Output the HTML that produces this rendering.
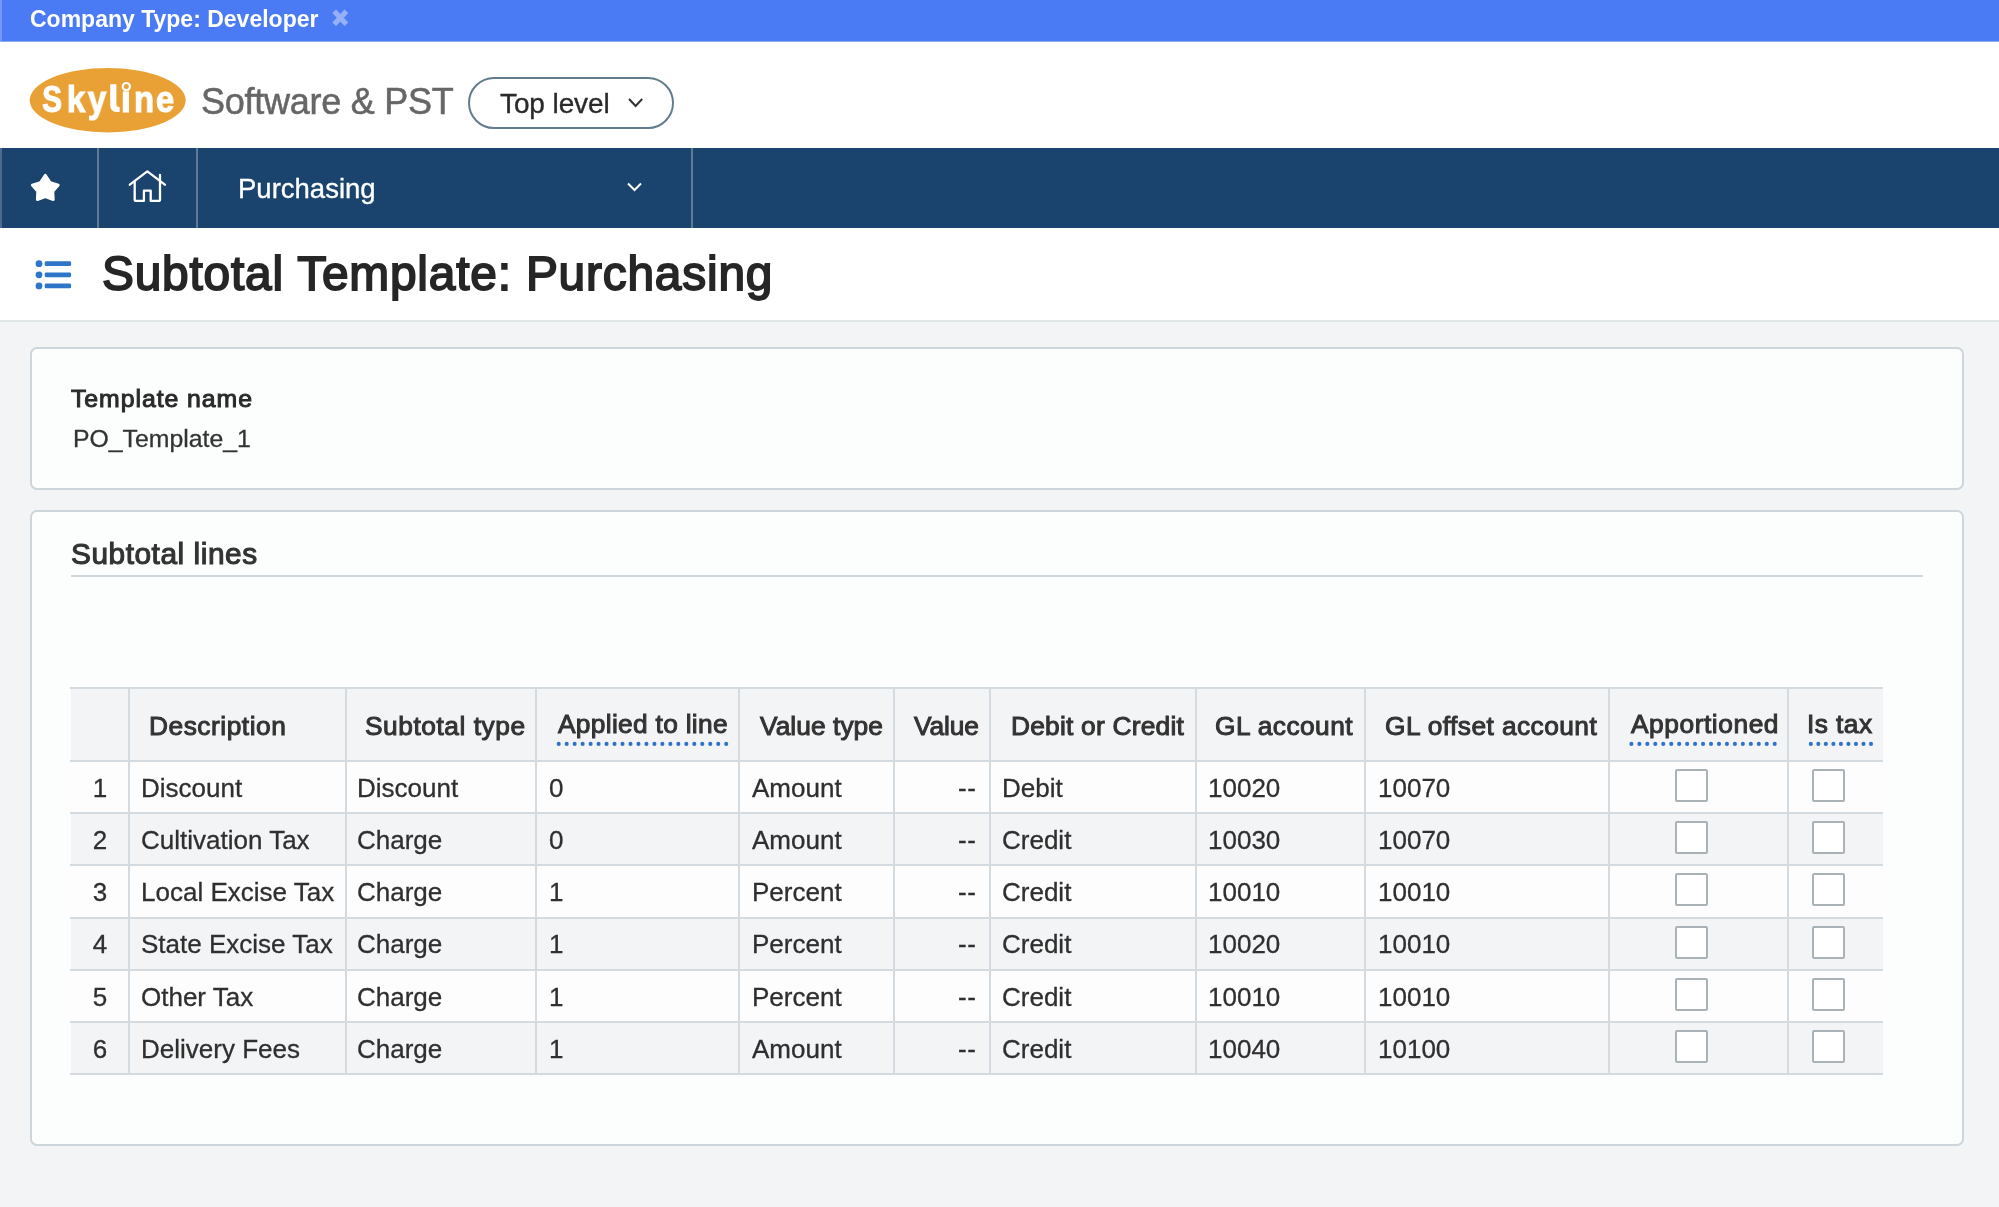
<!DOCTYPE html>
<html><head><meta charset="utf-8"><title>Subtotal Template: Purchasing</title>
<style>
html,body{margin:0;padding:0;}
body{width:1999px;height:1207px;position:relative;overflow:hidden;background:#f3f4f6;font-family:"Liberation Sans", sans-serif;}
.t{position:absolute;white-space:nowrap;will-change:transform;}
.b{position:absolute;}
svg{position:absolute;overflow:visible;}
</style></head><body>
<div class="b" style="left:0px;top:0px;width:1999px;height:42px;background:#4a7bf5;"></div>
<div class="b" style="left:0px;top:0px;width:2px;height:42px;background:#7598f3;"></div>
<div class="b" style="left:0px;top:41px;width:1999px;height:1px;background:#8fabf6;"></div>
<div class="t" style="left:29.50px;top:8.33px;font-size:23px;line-height:23px;color:#ffffff;font-weight:bold;">Company Type: Developer</div>
<svg style="left:0;top:0" width="400" height="42"><path d="M334.2 11.2 L346.4 24.2 M346.4 11.2 L334.2 24.2" stroke="#96b0f7" stroke-width="5.2" stroke-linecap="butt"/></svg>
<div class="b" style="left:0px;top:42px;width:1999px;height:106px;background:#ffffff;"></div>
<svg style="left:0;top:0" width="200" height="150"><ellipse cx="107.7" cy="100.2" rx="78" ry="32.2" fill="#e9a136"/></svg>
<div class="t" style="left:11.80px;width:80px;text-align:center;top:80.58px;font-size:37px;line-height:37px;color:#ffffff;font-weight:bold;-webkit-text-stroke:1.1px #fff;transform:scaleX(0.8);">S</div>
<div class="t" style="left:35.60px;width:80px;text-align:center;top:80.58px;font-size:37px;line-height:37px;color:#ffffff;font-weight:bold;-webkit-text-stroke:1.1px #fff;transform:scaleX(0.9);">k</div>
<div class="t" style="left:57.30px;width:80px;text-align:center;top:80.58px;font-size:37px;line-height:37px;color:#ffffff;font-weight:bold;-webkit-text-stroke:1.1px #fff;transform:scaleX(0.9);">y</div>
<div class="t" style="left:86.20px;width:80px;text-align:center;top:80.58px;font-size:37px;line-height:37px;color:#ffffff;font-weight:bold;-webkit-text-stroke:1.1px #fff;transform:scaleX(1.0);">&#305;</div>
<div class="t" style="left:104.00px;width:80px;text-align:center;top:80.58px;font-size:37px;line-height:37px;color:#ffffff;font-weight:bold;-webkit-text-stroke:1.1px #fff;transform:scaleX(0.88);">n</div>
<div class="t" style="left:124.50px;width:80px;text-align:center;top:80.58px;font-size:37px;line-height:37px;color:#ffffff;font-weight:bold;-webkit-text-stroke:1.1px #fff;transform:scaleX(0.88);">e</div>
<svg style="left:0;top:0" width="200" height="150"><path d="M110.2 84.3 H116.4 V104.6 Q116.4 106.9 118.6 106.9 H119.6 V112 H117.2 Q110.2 112 110.2 105.2 Z" fill="#fff"/></svg>
<svg style="left:0;top:0" width="200" height="150"><circle cx="126.3" cy="86.6" r="3.6" fill="none" stroke="#ffffff" stroke-width="2.2"/></svg>
<div class="t" style="left:201.00px;top:83.83px;font-size:36px;line-height:36px;color:#666666;font-weight:normal;letter-spacing:-0.25px;-webkit-text-stroke:0.55px #666;">Software &amp; PST</div>
<div class="b" style="left:468.4px;top:77px;width:201.8px;height:48px;border:2px solid #627c8c;border-radius:26px;box-sizing:content-box;"></div>
<div class="t" style="left:499.50px;top:89.90px;font-size:28px;line-height:28px;color:#2a2a2a;font-weight:normal;letter-spacing:-0.1px;-webkit-text-stroke:0.35px #2a2a2a;">Top level</div>
<svg style="left:626px;top:96px" width="20" height="14"><path d="M3 3 L9.6 10 L16.2 3" fill="none" stroke="#333" stroke-width="2"/></svg>
<div class="b" style="left:0px;top:148px;width:1999px;height:80px;background:#1a446e;"></div>
<div class="b" style="left:0px;top:148px;width:2px;height:80px;background:#4d6a8a;"></div>
<div class="b" style="left:97px;top:148px;width:2px;height:80px;background:#5f7a97;"></div>
<div class="b" style="left:196px;top:148px;width:2px;height:80px;background:#5f7a97;"></div>
<div class="b" style="left:691px;top:148px;width:2px;height:80px;background:#5f7a97;"></div>
<svg style="left:0;top:0" width="100" height="230"><path d="M45.3 175.2 L50.2 182.6 L58.3 185.1 L52.9 191.3 L53.3 199.6 L45.3 196.6 L37.3 199.6 L37.7 191.3 L32.3 185.1 L40.4 182.6 Z" fill="#fff" stroke="#fff" stroke-width="2.8" stroke-linejoin="round"/></svg>
<svg style="left:0;top:0" width="200" height="230"><path d="M129.8 184.7 L147.3 171.4 L164.9 184.7 M160 174.8 L160 180.5 M134.7 181.3 L134.7 199.4 Q134.7 200.9 136.2 200.9 L143.9 200.9 L143.9 190.6 L150.7 190.6 L150.7 200.9 L158.5 200.9 Q160 200.9 160 199.4 L160 181.3" fill="none" stroke="#fff" stroke-width="2.3" stroke-linecap="round" stroke-linejoin="round"/></svg>
<div class="t" style="left:237.50px;top:174.52px;font-size:27.5px;line-height:27.5px;color:#ffffff;font-weight:normal;-webkit-text-stroke:0.35px #fff;">Purchasing</div>
<svg style="left:625px;top:181px" width="20" height="14"><path d="M3 2.5 L9.5 9 L16 2.5" fill="none" stroke="#fff" stroke-width="2"/></svg>
<div class="b" style="left:0px;top:228px;width:1999px;height:92px;background:#ffffff;"></div>
<div class="b" style="left:0px;top:320px;width:1999px;height:2px;background:#e0e6e8;"></div>
<svg style="left:30px;top:255px" width="46" height="40"><circle cx="9" cy="8.7" r="3.4" fill="#2f76c8"/><circle cx="9" cy="19.8" r="3.4" fill="#2f76c8"/><circle cx="9" cy="30.9" r="3.4" fill="#2f76c8"/><rect x="14.7" y="6.3" width="26.4" height="4.8" rx="1.4" fill="#2f76c8"/><rect x="14.7" y="17.4" width="26.4" height="4.8" rx="1.4" fill="#2f76c8"/><rect x="14.7" y="28.5" width="26.4" height="4.8" rx="1.4" fill="#2f76c8"/></svg>
<div class="t" style="left:102.20px;top:249.74px;font-size:47.8px;line-height:47.8px;color:#262626;font-weight:normal;letter-spacing:0.82px;-webkit-text-stroke:1.8px #262626;">Subtotal Template: Purchasing</div>
<div class="b" style="left:30px;top:347px;width:1934px;height:143px;background:#fcfdfd;border:2px solid #cdd6db;border-radius:7px;background:#fcfdfd;box-sizing:border-box;"></div>
<div class="t" style="left:71.40px;top:387.11px;font-size:24.8px;line-height:24.8px;color:#2a2a2a;font-weight:normal;letter-spacing:0.95px;-webkit-text-stroke:1px #2a2a2a;">Template name</div>
<div class="t" style="left:73.20px;top:427.31px;font-size:24.8px;line-height:24.8px;color:#333333;font-weight:normal;-webkit-text-stroke:0.3px #333;">PO_Template_1</div>
<div class="b" style="left:30px;top:510px;width:1934px;height:636px;background:#fcfdfd;border:2px solid #cdd6db;border-radius:7px;background:#fcfdfd;box-sizing:border-box;"></div>
<div class="t" style="left:71.00px;top:539.27px;font-size:29.8px;line-height:29.8px;color:#333333;font-weight:normal;letter-spacing:0.55px;-webkit-text-stroke:1.1px #333;">Subtotal lines</div>
<div class="b" style="left:71px;top:574.5px;width:1852px;height:2px;background:#cfd8dc;"></div>
<div class="b" style="left:71px;top:688px;width:1812px;height:73px;background:#f3f4f6;"></div>
<div class="b" style="left:71px;top:761px;width:1812px;height:52px;background:#fdfdfd;"></div>
<div class="b" style="left:71px;top:813px;width:1812px;height:52px;background:#f3f4f6;"></div>
<div class="b" style="left:71px;top:865px;width:1812px;height:53px;background:#fdfdfd;"></div>
<div class="b" style="left:71px;top:918px;width:1812px;height:52px;background:#f3f4f6;"></div>
<div class="b" style="left:71px;top:970px;width:1812px;height:52px;background:#fdfdfd;"></div>
<div class="b" style="left:71px;top:1022px;width:1812px;height:52px;background:#f3f4f6;"></div>
<div class="b" style="left:70px;top:687px;width:1813px;height:2px;background:#d3dbe0;"></div>
<div class="b" style="left:70px;top:760px;width:1813px;height:2px;background:#d3dbe0;"></div>
<div class="b" style="left:70px;top:812px;width:1813px;height:2px;background:#d3dbe0;"></div>
<div class="b" style="left:70px;top:864px;width:1813px;height:2px;background:#d3dbe0;"></div>
<div class="b" style="left:70px;top:917px;width:1813px;height:2px;background:#d3dbe0;"></div>
<div class="b" style="left:70px;top:969px;width:1813px;height:2px;background:#d3dbe0;"></div>
<div class="b" style="left:70px;top:1021px;width:1813px;height:2px;background:#d3dbe0;"></div>
<div class="b" style="left:70px;top:1073px;width:1813px;height:2px;background:#d3dbe0;"></div>
<div class="b" style="left:128px;top:688px;width:2px;height:386px;background:#d3dbe0;"></div>
<div class="b" style="left:345px;top:688px;width:2px;height:386px;background:#d3dbe0;"></div>
<div class="b" style="left:535px;top:688px;width:2px;height:386px;background:#d3dbe0;"></div>
<div class="b" style="left:738px;top:688px;width:2px;height:386px;background:#d3dbe0;"></div>
<div class="b" style="left:893px;top:688px;width:2px;height:386px;background:#d3dbe0;"></div>
<div class="b" style="left:989px;top:688px;width:2px;height:386px;background:#d3dbe0;"></div>
<div class="b" style="left:1195px;top:688px;width:2px;height:386px;background:#d3dbe0;"></div>
<div class="b" style="left:1364px;top:688px;width:2px;height:386px;background:#d3dbe0;"></div>
<div class="b" style="left:1608px;top:688px;width:2px;height:386px;background:#d3dbe0;"></div>
<div class="b" style="left:1787px;top:688px;width:2px;height:386px;background:#d3dbe0;"></div>
<div class="t" style="left:148.90px;top:712.64px;font-size:26.3px;line-height:26.3px;color:#333333;font-weight:normal;letter-spacing:0.525px;-webkit-text-stroke:1.0px #333;">Description</div>
<div class="t" style="left:364.50px;top:712.64px;font-size:26.3px;line-height:26.3px;color:#333333;font-weight:normal;letter-spacing:0.546px;-webkit-text-stroke:1.0px #333;">Subtotal type</div>
<div class="t" style="left:558.20px;top:710.64px;font-size:26.3px;line-height:26.3px;color:#333333;font-weight:normal;letter-spacing:0.311px;-webkit-text-stroke:1.0px #333;">Applied to line</div>
<div class="t" style="left:760.20px;top:712.64px;font-size:26.3px;line-height:26.3px;color:#333333;font-weight:normal;letter-spacing:0.067px;-webkit-text-stroke:1.0px #333;">Value type</div>
<div class="t" style="left:913.95px;top:712.64px;font-size:26.3px;line-height:26.3px;color:#333333;font-weight:normal;letter-spacing:-0.1px;-webkit-text-stroke:1.0px #333;">Value</div>
<div class="t" style="left:1010.50px;top:712.64px;font-size:26.3px;line-height:26.3px;color:#333333;font-weight:normal;letter-spacing:0.232px;-webkit-text-stroke:1.0px #333;">Debit or Credit</div>
<div class="t" style="left:1214.50px;top:712.64px;font-size:26.3px;line-height:26.3px;color:#333333;font-weight:normal;letter-spacing:0.444px;-webkit-text-stroke:1.0px #333;">GL account</div>
<div class="t" style="left:1384.50px;top:712.64px;font-size:26.3px;line-height:26.3px;color:#333333;font-weight:normal;letter-spacing:0.441px;-webkit-text-stroke:1.0px #333;">GL offset account</div>
<div class="t" style="left:1630.60px;top:710.64px;font-size:26.3px;line-height:26.3px;color:#333333;font-weight:normal;letter-spacing:0.565px;-webkit-text-stroke:1.0px #333;">Apportioned</div>
<div class="t" style="left:1807.40px;top:710.64px;font-size:26.3px;line-height:26.3px;color:#333333;font-weight:normal;letter-spacing:0.44px;-webkit-text-stroke:1.0px #333;">Is tax</div>
<svg style="left:0;top:0" width="1999" height="800"><circle cx="558.70" cy="743.9" r="2.05" fill="#2f73c9"/><circle cx="566.68" cy="743.9" r="2.05" fill="#2f73c9"/><circle cx="574.65" cy="743.9" r="2.05" fill="#2f73c9"/><circle cx="582.63" cy="743.9" r="2.05" fill="#2f73c9"/><circle cx="590.60" cy="743.9" r="2.05" fill="#2f73c9"/><circle cx="598.58" cy="743.9" r="2.05" fill="#2f73c9"/><circle cx="606.56" cy="743.9" r="2.05" fill="#2f73c9"/><circle cx="614.53" cy="743.9" r="2.05" fill="#2f73c9"/><circle cx="622.51" cy="743.9" r="2.05" fill="#2f73c9"/><circle cx="630.49" cy="743.9" r="2.05" fill="#2f73c9"/><circle cx="638.46" cy="743.9" r="2.05" fill="#2f73c9"/><circle cx="646.44" cy="743.9" r="2.05" fill="#2f73c9"/><circle cx="654.41" cy="743.9" r="2.05" fill="#2f73c9"/><circle cx="662.39" cy="743.9" r="2.05" fill="#2f73c9"/><circle cx="670.37" cy="743.9" r="2.05" fill="#2f73c9"/><circle cx="678.34" cy="743.9" r="2.05" fill="#2f73c9"/><circle cx="686.32" cy="743.9" r="2.05" fill="#2f73c9"/><circle cx="694.30" cy="743.9" r="2.05" fill="#2f73c9"/><circle cx="702.27" cy="743.9" r="2.05" fill="#2f73c9"/><circle cx="710.25" cy="743.9" r="2.05" fill="#2f73c9"/><circle cx="718.22" cy="743.9" r="2.05" fill="#2f73c9"/><circle cx="726.20" cy="743.9" r="2.05" fill="#2f73c9"/></svg>
<svg style="left:0;top:0" width="1999" height="800"><circle cx="1631.40" cy="743.9" r="2.05" fill="#2f73c9"/><circle cx="1639.36" cy="743.9" r="2.05" fill="#2f73c9"/><circle cx="1647.32" cy="743.9" r="2.05" fill="#2f73c9"/><circle cx="1655.28" cy="743.9" r="2.05" fill="#2f73c9"/><circle cx="1663.24" cy="743.9" r="2.05" fill="#2f73c9"/><circle cx="1671.21" cy="743.9" r="2.05" fill="#2f73c9"/><circle cx="1679.17" cy="743.9" r="2.05" fill="#2f73c9"/><circle cx="1687.13" cy="743.9" r="2.05" fill="#2f73c9"/><circle cx="1695.09" cy="743.9" r="2.05" fill="#2f73c9"/><circle cx="1703.05" cy="743.9" r="2.05" fill="#2f73c9"/><circle cx="1711.01" cy="743.9" r="2.05" fill="#2f73c9"/><circle cx="1718.97" cy="743.9" r="2.05" fill="#2f73c9"/><circle cx="1726.93" cy="743.9" r="2.05" fill="#2f73c9"/><circle cx="1734.89" cy="743.9" r="2.05" fill="#2f73c9"/><circle cx="1742.86" cy="743.9" r="2.05" fill="#2f73c9"/><circle cx="1750.82" cy="743.9" r="2.05" fill="#2f73c9"/><circle cx="1758.78" cy="743.9" r="2.05" fill="#2f73c9"/><circle cx="1766.74" cy="743.9" r="2.05" fill="#2f73c9"/><circle cx="1774.70" cy="743.9" r="2.05" fill="#2f73c9"/></svg>
<svg style="left:0;top:0" width="1999" height="800"><circle cx="1810.80" cy="743.9" r="2.05" fill="#2f73c9"/><circle cx="1818.33" cy="743.9" r="2.05" fill="#2f73c9"/><circle cx="1825.85" cy="743.9" r="2.05" fill="#2f73c9"/><circle cx="1833.38" cy="743.9" r="2.05" fill="#2f73c9"/><circle cx="1840.90" cy="743.9" r="2.05" fill="#2f73c9"/><circle cx="1848.42" cy="743.9" r="2.05" fill="#2f73c9"/><circle cx="1855.95" cy="743.9" r="2.05" fill="#2f73c9"/><circle cx="1863.47" cy="743.9" r="2.05" fill="#2f73c9"/><circle cx="1871.00" cy="743.9" r="2.05" fill="#2f73c9"/></svg>
<div class="t" style="left:80.00px;width:40px;text-align:center;top:774.79px;font-size:26px;line-height:26px;color:#2f2f2f;font-weight:normal;-webkit-text-stroke:0.3px #2f2f2f;">1</div>
<div class="t" style="left:140.60px;top:774.79px;font-size:26px;line-height:26px;color:#2f2f2f;font-weight:normal;-webkit-text-stroke:0.3px #2f2f2f;">Discount</div>
<div class="t" style="left:357.30px;top:774.79px;font-size:26px;line-height:26px;color:#2f2f2f;font-weight:normal;-webkit-text-stroke:0.3px #2f2f2f;">Discount</div>
<div class="t" style="left:549.00px;top:774.79px;font-size:26px;line-height:26px;color:#2f2f2f;font-weight:normal;-webkit-text-stroke:0.3px #2f2f2f;">0</div>
<div class="t" style="left:752.00px;top:774.79px;font-size:26px;line-height:26px;color:#2f2f2f;font-weight:normal;-webkit-text-stroke:0.3px #2f2f2f;">Amount</div>
<div class="t" style="right:1022.40px;top:774.79px;font-size:26px;line-height:26px;color:#2f2f2f;font-weight:normal;-webkit-text-stroke:0.3px #2f2f2f;letter-spacing:0.7px;">--</div>
<div class="t" style="left:1001.60px;top:774.79px;font-size:26px;line-height:26px;color:#2f2f2f;font-weight:normal;-webkit-text-stroke:0.3px #2f2f2f;">Debit</div>
<div class="t" style="left:1208.00px;top:774.79px;font-size:26px;line-height:26px;color:#2f2f2f;font-weight:normal;-webkit-text-stroke:0.3px #2f2f2f;">10020</div>
<div class="t" style="left:1377.50px;top:774.79px;font-size:26px;line-height:26px;color:#2f2f2f;font-weight:normal;-webkit-text-stroke:0.3px #2f2f2f;">10070</div>
<div class="b" style="left:1675.2px;top:768.9px;width:33.2px;height:33px;border:2px solid #a9b3b7;border-radius:2px;background:#fff;box-sizing:border-box;"></div>
<div class="b" style="left:1811.7px;top:768.9px;width:33.2px;height:33px;border:2px solid #a9b3b7;border-radius:2px;background:#fff;box-sizing:border-box;"></div>
<div class="t" style="left:80.00px;width:40px;text-align:center;top:826.99px;font-size:26px;line-height:26px;color:#2f2f2f;font-weight:normal;-webkit-text-stroke:0.3px #2f2f2f;">2</div>
<div class="t" style="left:140.60px;top:826.99px;font-size:26px;line-height:26px;color:#2f2f2f;font-weight:normal;-webkit-text-stroke:0.3px #2f2f2f;">Cultivation Tax</div>
<div class="t" style="left:357.30px;top:826.99px;font-size:26px;line-height:26px;color:#2f2f2f;font-weight:normal;-webkit-text-stroke:0.3px #2f2f2f;">Charge</div>
<div class="t" style="left:549.00px;top:826.99px;font-size:26px;line-height:26px;color:#2f2f2f;font-weight:normal;-webkit-text-stroke:0.3px #2f2f2f;">0</div>
<div class="t" style="left:752.00px;top:826.99px;font-size:26px;line-height:26px;color:#2f2f2f;font-weight:normal;-webkit-text-stroke:0.3px #2f2f2f;">Amount</div>
<div class="t" style="right:1022.40px;top:826.99px;font-size:26px;line-height:26px;color:#2f2f2f;font-weight:normal;-webkit-text-stroke:0.3px #2f2f2f;letter-spacing:0.7px;">--</div>
<div class="t" style="left:1001.60px;top:826.99px;font-size:26px;line-height:26px;color:#2f2f2f;font-weight:normal;-webkit-text-stroke:0.3px #2f2f2f;">Credit</div>
<div class="t" style="left:1208.00px;top:826.99px;font-size:26px;line-height:26px;color:#2f2f2f;font-weight:normal;-webkit-text-stroke:0.3px #2f2f2f;">10030</div>
<div class="t" style="left:1377.50px;top:826.99px;font-size:26px;line-height:26px;color:#2f2f2f;font-weight:normal;-webkit-text-stroke:0.3px #2f2f2f;">10070</div>
<div class="b" style="left:1675.2px;top:821.1px;width:33.2px;height:33px;border:2px solid #a9b3b7;border-radius:2px;background:#fff;box-sizing:border-box;"></div>
<div class="b" style="left:1811.7px;top:821.1px;width:33.2px;height:33px;border:2px solid #a9b3b7;border-radius:2px;background:#fff;box-sizing:border-box;"></div>
<div class="t" style="left:80.00px;width:40px;text-align:center;top:879.19px;font-size:26px;line-height:26px;color:#2f2f2f;font-weight:normal;-webkit-text-stroke:0.3px #2f2f2f;">3</div>
<div class="t" style="left:140.60px;top:879.19px;font-size:26px;line-height:26px;color:#2f2f2f;font-weight:normal;-webkit-text-stroke:0.3px #2f2f2f;">Local Excise Tax</div>
<div class="t" style="left:357.30px;top:879.19px;font-size:26px;line-height:26px;color:#2f2f2f;font-weight:normal;-webkit-text-stroke:0.3px #2f2f2f;">Charge</div>
<div class="t" style="left:549.00px;top:879.19px;font-size:26px;line-height:26px;color:#2f2f2f;font-weight:normal;-webkit-text-stroke:0.3px #2f2f2f;">1</div>
<div class="t" style="left:752.00px;top:879.19px;font-size:26px;line-height:26px;color:#2f2f2f;font-weight:normal;-webkit-text-stroke:0.3px #2f2f2f;">Percent</div>
<div class="t" style="right:1022.40px;top:879.19px;font-size:26px;line-height:26px;color:#2f2f2f;font-weight:normal;-webkit-text-stroke:0.3px #2f2f2f;letter-spacing:0.7px;">--</div>
<div class="t" style="left:1001.60px;top:879.19px;font-size:26px;line-height:26px;color:#2f2f2f;font-weight:normal;-webkit-text-stroke:0.3px #2f2f2f;">Credit</div>
<div class="t" style="left:1208.00px;top:879.19px;font-size:26px;line-height:26px;color:#2f2f2f;font-weight:normal;-webkit-text-stroke:0.3px #2f2f2f;">10010</div>
<div class="t" style="left:1377.50px;top:879.19px;font-size:26px;line-height:26px;color:#2f2f2f;font-weight:normal;-webkit-text-stroke:0.3px #2f2f2f;">10010</div>
<div class="b" style="left:1675.2px;top:873.3px;width:33.2px;height:33px;border:2px solid #a9b3b7;border-radius:2px;background:#fff;box-sizing:border-box;"></div>
<div class="b" style="left:1811.7px;top:873.3px;width:33.2px;height:33px;border:2px solid #a9b3b7;border-radius:2px;background:#fff;box-sizing:border-box;"></div>
<div class="t" style="left:80.00px;width:40px;text-align:center;top:931.39px;font-size:26px;line-height:26px;color:#2f2f2f;font-weight:normal;-webkit-text-stroke:0.3px #2f2f2f;">4</div>
<div class="t" style="left:140.60px;top:931.39px;font-size:26px;line-height:26px;color:#2f2f2f;font-weight:normal;-webkit-text-stroke:0.3px #2f2f2f;">State Excise Tax</div>
<div class="t" style="left:357.30px;top:931.39px;font-size:26px;line-height:26px;color:#2f2f2f;font-weight:normal;-webkit-text-stroke:0.3px #2f2f2f;">Charge</div>
<div class="t" style="left:549.00px;top:931.39px;font-size:26px;line-height:26px;color:#2f2f2f;font-weight:normal;-webkit-text-stroke:0.3px #2f2f2f;">1</div>
<div class="t" style="left:752.00px;top:931.39px;font-size:26px;line-height:26px;color:#2f2f2f;font-weight:normal;-webkit-text-stroke:0.3px #2f2f2f;">Percent</div>
<div class="t" style="right:1022.40px;top:931.39px;font-size:26px;line-height:26px;color:#2f2f2f;font-weight:normal;-webkit-text-stroke:0.3px #2f2f2f;letter-spacing:0.7px;">--</div>
<div class="t" style="left:1001.60px;top:931.39px;font-size:26px;line-height:26px;color:#2f2f2f;font-weight:normal;-webkit-text-stroke:0.3px #2f2f2f;">Credit</div>
<div class="t" style="left:1208.00px;top:931.39px;font-size:26px;line-height:26px;color:#2f2f2f;font-weight:normal;-webkit-text-stroke:0.3px #2f2f2f;">10020</div>
<div class="t" style="left:1377.50px;top:931.39px;font-size:26px;line-height:26px;color:#2f2f2f;font-weight:normal;-webkit-text-stroke:0.3px #2f2f2f;">10010</div>
<div class="b" style="left:1675.2px;top:925.5px;width:33.2px;height:33px;border:2px solid #a9b3b7;border-radius:2px;background:#fff;box-sizing:border-box;"></div>
<div class="b" style="left:1811.7px;top:925.5px;width:33.2px;height:33px;border:2px solid #a9b3b7;border-radius:2px;background:#fff;box-sizing:border-box;"></div>
<div class="t" style="left:80.00px;width:40px;text-align:center;top:983.59px;font-size:26px;line-height:26px;color:#2f2f2f;font-weight:normal;-webkit-text-stroke:0.3px #2f2f2f;">5</div>
<div class="t" style="left:140.60px;top:983.59px;font-size:26px;line-height:26px;color:#2f2f2f;font-weight:normal;-webkit-text-stroke:0.3px #2f2f2f;">Other Tax</div>
<div class="t" style="left:357.30px;top:983.59px;font-size:26px;line-height:26px;color:#2f2f2f;font-weight:normal;-webkit-text-stroke:0.3px #2f2f2f;">Charge</div>
<div class="t" style="left:549.00px;top:983.59px;font-size:26px;line-height:26px;color:#2f2f2f;font-weight:normal;-webkit-text-stroke:0.3px #2f2f2f;">1</div>
<div class="t" style="left:752.00px;top:983.59px;font-size:26px;line-height:26px;color:#2f2f2f;font-weight:normal;-webkit-text-stroke:0.3px #2f2f2f;">Percent</div>
<div class="t" style="right:1022.40px;top:983.59px;font-size:26px;line-height:26px;color:#2f2f2f;font-weight:normal;-webkit-text-stroke:0.3px #2f2f2f;letter-spacing:0.7px;">--</div>
<div class="t" style="left:1001.60px;top:983.59px;font-size:26px;line-height:26px;color:#2f2f2f;font-weight:normal;-webkit-text-stroke:0.3px #2f2f2f;">Credit</div>
<div class="t" style="left:1208.00px;top:983.59px;font-size:26px;line-height:26px;color:#2f2f2f;font-weight:normal;-webkit-text-stroke:0.3px #2f2f2f;">10010</div>
<div class="t" style="left:1377.50px;top:983.59px;font-size:26px;line-height:26px;color:#2f2f2f;font-weight:normal;-webkit-text-stroke:0.3px #2f2f2f;">10010</div>
<div class="b" style="left:1675.2px;top:977.7px;width:33.2px;height:33px;border:2px solid #a9b3b7;border-radius:2px;background:#fff;box-sizing:border-box;"></div>
<div class="b" style="left:1811.7px;top:977.7px;width:33.2px;height:33px;border:2px solid #a9b3b7;border-radius:2px;background:#fff;box-sizing:border-box;"></div>
<div class="t" style="left:80.00px;width:40px;text-align:center;top:1035.79px;font-size:26px;line-height:26px;color:#2f2f2f;font-weight:normal;-webkit-text-stroke:0.3px #2f2f2f;">6</div>
<div class="t" style="left:140.60px;top:1035.79px;font-size:26px;line-height:26px;color:#2f2f2f;font-weight:normal;-webkit-text-stroke:0.3px #2f2f2f;">Delivery Fees</div>
<div class="t" style="left:357.30px;top:1035.79px;font-size:26px;line-height:26px;color:#2f2f2f;font-weight:normal;-webkit-text-stroke:0.3px #2f2f2f;">Charge</div>
<div class="t" style="left:549.00px;top:1035.79px;font-size:26px;line-height:26px;color:#2f2f2f;font-weight:normal;-webkit-text-stroke:0.3px #2f2f2f;">1</div>
<div class="t" style="left:752.00px;top:1035.79px;font-size:26px;line-height:26px;color:#2f2f2f;font-weight:normal;-webkit-text-stroke:0.3px #2f2f2f;">Amount</div>
<div class="t" style="right:1022.40px;top:1035.79px;font-size:26px;line-height:26px;color:#2f2f2f;font-weight:normal;-webkit-text-stroke:0.3px #2f2f2f;letter-spacing:0.7px;">--</div>
<div class="t" style="left:1001.60px;top:1035.79px;font-size:26px;line-height:26px;color:#2f2f2f;font-weight:normal;-webkit-text-stroke:0.3px #2f2f2f;">Credit</div>
<div class="t" style="left:1208.00px;top:1035.79px;font-size:26px;line-height:26px;color:#2f2f2f;font-weight:normal;-webkit-text-stroke:0.3px #2f2f2f;">10040</div>
<div class="t" style="left:1377.50px;top:1035.79px;font-size:26px;line-height:26px;color:#2f2f2f;font-weight:normal;-webkit-text-stroke:0.3px #2f2f2f;">10100</div>
<div class="b" style="left:1675.2px;top:1029.9px;width:33.2px;height:33px;border:2px solid #a9b3b7;border-radius:2px;background:#fff;box-sizing:border-box;"></div>
<div class="b" style="left:1811.7px;top:1029.9px;width:33.2px;height:33px;border:2px solid #a9b3b7;border-radius:2px;background:#fff;box-sizing:border-box;"></div>
</body></html>
